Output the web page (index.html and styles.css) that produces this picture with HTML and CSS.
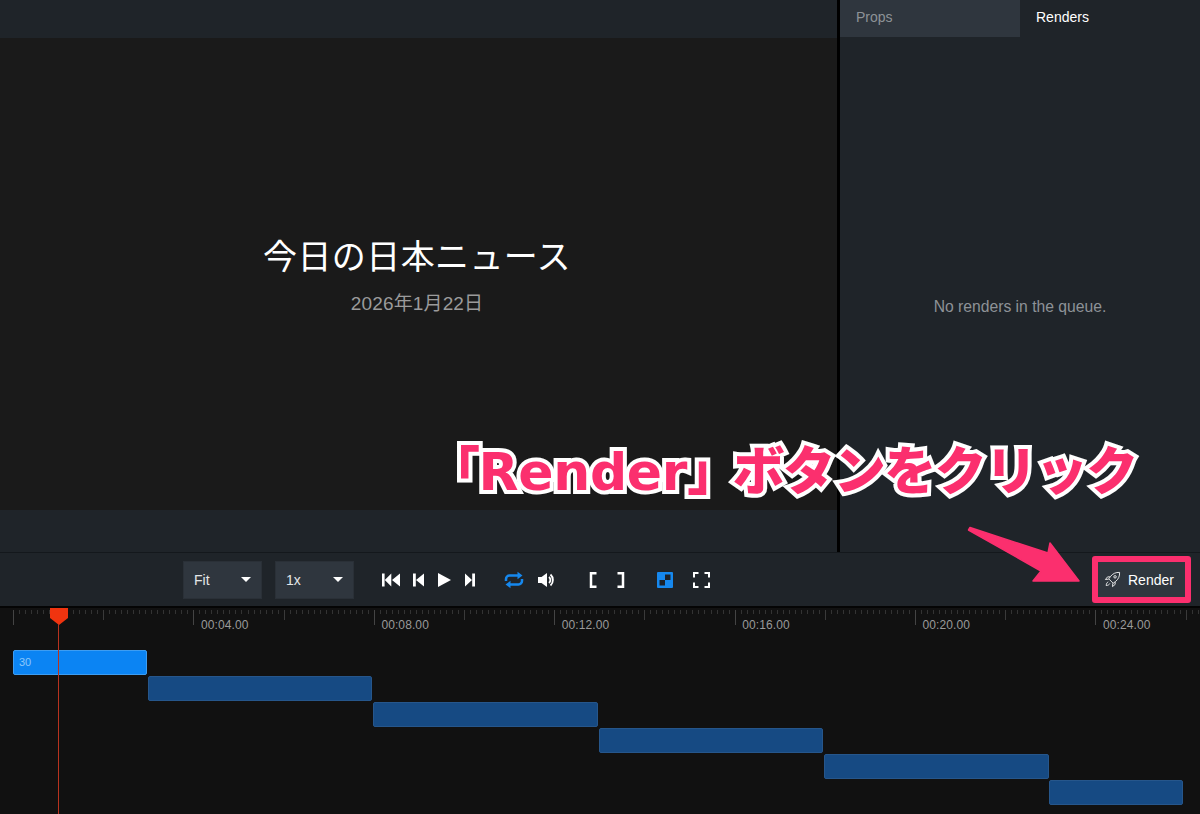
FILE: index.html
```html
<!DOCTYPE html>
<html lang="ja">
<head>
    <meta charset="UTF-8">
    <title>Render</title>
    <link rel="stylesheet" href="styles.css">
</head>
<body>
<div class="app">
  <div class="top">
    <section class="preview">
      <div class="strip strip-top"></div>
      <div class="canvas">
        <h1 class="news-title">今日の日本ニュース</h1>
        <p class="news-date">2026年1月22日</p>
      </div>
      <div class="strip strip-bottom"></div>
    </section>
    <aside class="panel">
      <div class="tabs">
        <div class="tab">Props</div>
        <div class="tab tab-active">Renders</div>
      </div>
      <div class="panel-body">No renders in the queue.</div>
    </aside>
  </div>

  <div class="toolbar">
    <div class="select select-fit">Fit<span class="caret"></span></div>
    <div class="select select-rate">1x<span class="caret"></span></div>
    <div class="controls">
      <svg class="ico ico-back" width="20" height="16" viewBox="0 0 20 16"><path d="M1 1.500h2.600v13H1zM10.300 1.500v13L3.800 8zM19 1.500v13L11 8z" fill="#fff"/></svg>
      <svg class="ico ico-prev" width="12" height="16" viewBox="0 0 12 16"><path d="M1 1.500h2.800v13H1zM12 1.500v13L4 8z" fill="#fff"/></svg>
      <svg class="ico ico-play" width="14" height="16" viewBox="0 0 14 16"><path d="M1 1v14L14 8z" fill="#fff"/></svg>
      <svg class="ico ico-next" width="12" height="16" viewBox="0 0 12 16"><path d="M1 1.500v13L8 8zM8.200 1.500H11v13H8.200z" fill="#fff"/></svg>
      <svg class="ico ico-loop" width="20" height="18" viewBox="0 0 20 18"><path d="M2 10V8a3.500 3.500 0 0 1 3.500-3.500H15M18 8v2a3.500 3.500 0 0 1-3.500 3.500H5" fill="none" stroke="#1688ee" stroke-width="2.500"/><path d="M13.500 .8v7.400L18.500 4.500zM6.500 9.800v7.400L1.500 13.500z" fill="#1688ee"/></svg>
      <svg class="ico ico-vol" width="18" height="16" viewBox="0 0 18 16"><path d="M1 5h3.500L10 1v14L4.500 11H1z" fill="#fff"/><path d="M12 5a4 4 0 0 1 0 6M13.500 2.500a7.500 7.500 0 0 1 0 11" fill="none" stroke="#fff" stroke-width="1.800"/></svg>
      <svg class="ico ico-in" width="8" height="16" viewBox="0 0 8 16"><path d="M7.500 1.200H2v13.600h5.500" fill="none" stroke="#fff" stroke-width="2.500"/></svg>
      <svg class="ico ico-out" width="8" height="16" viewBox="0 0 8 16"><path d="M.5 1.200H6v13.600H.5" fill="none" stroke="#fff" stroke-width="2.500"/></svg>
      <svg class="ico ico-check" width="16" height="16" viewBox="0 0 16 16"><rect width="16" height="16" rx="1" fill="#1688ee"/><path d="M8 2.500h5.500V8H8zM2.500 8H8v5.500H2.500z" fill="#1c222a"/></svg>
      <svg class="ico ico-full" width="17" height="16" viewBox="0 0 17 16"><path d="M1 5.500V1h4.500M11.500 1H16v4.500M16 10.500V15h-4.500M5.500 15H1v-4.500" fill="none" stroke="#fff" stroke-width="2"/></svg>
    </div>
    <div class="render-btn">
      <svg width="17" height="17" viewBox="0 0 18 18"><path d="M16.500 1.500c-4-.3-7.300 1.300-9.500 4.200L5 8.300l4.700 4.700 2.600-2c2.900-2.200 4.500-5.500 4.200-9.500zM6.500 6.200H3.800L1.500 9l3.500-.3M11.800 11.500v2.700L9 16.500l.3-3.500M4.500 11.500c-1.300.6-2 1.800-2.200 3.900 2.100-.2 3.300-.9 3.900-2.200" fill="none" stroke="#fff" stroke-width=".9" stroke-linejoin="round"/><circle cx="11.700" cy="6.200" r="1.300" fill="none" stroke="#fff" stroke-width=".9"/></svg>
      Render
    </div>
  </div>

  <div class="timeline">
    <div class="ruler">
      <span class="time">00:04.00</span>
      <span class="time">00:08.00</span>
      <span class="time">00:12.00</span>
      <span class="time">00:16.00</span>
      <span class="time">00:20.00</span>
      <span class="time">00:24.00</span>
    </div>
    <div class="tracks">
      <div class="clip clip-active" style="margin-left:13px;width:134px">30</div>
      <div class="clip" style="margin-left:148px;width:224px"></div>
      <div class="clip" style="margin-left:373px;width:225px"></div>
      <div class="clip" style="margin-left:599px;width:224px"></div>
      <div class="clip" style="margin-left:824px;width:225px"></div>
      <div class="clip" style="margin-left:1049px;width:134px"></div>
    </div>
    <div class="playhead">
      <svg width="18" height="17" viewBox="0 0 18 17"><path d="M0 0h18v10l-9 7-9-7z" fill="#f0340f"/></svg>
    </div>
  </div>

  <!-- annotation over the screenshot -->
  <div class="callout">「<span class="callout-latin">Render</span><span class="callout-close">」</span>ボタンをクリック</div>
  <svg class="arrow" width="130" height="70" viewBox="0 0 130 70"><path d="M1.500 4 3 1.500 81 27 83 17 112 55 66 55 74 45z" fill="#fb2f6e" stroke="#fb2f6e" stroke-width="1.500" stroke-linejoin="round"/></svg>
  <div class="render-mark"></div>
</div>
</body>
</html>
```

FILE: styles.css
```css
* {
  box-sizing: border-box;
}

html, body {
  margin: 0;
  height: 100%;
  overflow: hidden;
}

body {
  background: #111;
  color: #fff;
  font-family: "Liberation Sans", "Noto Sans CJK JP", sans-serif;
}

.app {
  position: relative;
  width: 1200px;
  height: 814px;
  display: flex;
  flex-direction: column;
}

/* Preview + side panel */
.top {
  display: flex;
  height: 552px;
}

.preview {
  width: 837px;
  display: flex;
  flex-direction: column;
}

.strip {
  background: #1f2429;
}

.strip-top {
  height: 38px;
}

.strip-bottom {
  height: 42px;
}

.canvas {
  flex: 1;
  background: #1a1a1a;
  display: flex;
  flex-direction: column;
  align-items: center;
  padding-top: 195px;
  padding-right: 3px;
}

.news-title {
  margin: 0;
  font-size: 34px;
  line-height: 44px;
  font-weight: 400;
  letter-spacing: 0.4px;
  font-family: "Noto Sans CJK JP", sans-serif;
  color: #fff;
}

.news-date {
  margin: 15px 0 0;
  font-size: 19px;
  line-height: 24px;
  letter-spacing: 0.15px;
  font-family: "Liberation Sans", "Noto Sans CJK JP", sans-serif;
  color: #9b9b9b;
}

.panel {
  flex: 1;
  margin-left: 3px;
  background: #1f2429;
  display: flex;
  flex-direction: column;
  position: relative;
}

.panel::before {
  content: "";
  position: absolute;
  left: -3px;
  top: 0;
  width: 3px;
  height: 100%;
  background: #000;
}

.tabs {
  display: flex;
  height: 37px;
  font-size: 14px;
}

.tab {
  width: 180px;
  padding: 9px 16px 0;
  background: #2f363e;
  color: #8d9297;
}

.tab-active {
  background: transparent;
  color: #fff;
}

.panel-body {
  flex: 1;
  display: flex;
  align-items: center;
  justify-content: center;
  padding-top: 24px;
  font-size: 15.7px;
  color: #8d9297;
}

/* Player controls */
.toolbar {
  height: 54px;
  background: #1f2429;
  border-top: 1px solid #14181c;
  display: flex;
  align-items: center;
  padding: 0 15px 0 183px;
}

.select {
  width: 79px;
  height: 38px;
  padding: 0 10px;
  margin-right: 13px;
  background: #2f363e;
  border: 1px solid #2a3037;
  font-size: 14px;
  color: #e4e6e8;
  display: flex;
  align-items: center;
  justify-content: space-between;
}

.caret {
  width: 0;
  height: 0;
  border-left: 5px solid transparent;
  border-right: 5px solid transparent;
  border-top: 5px solid #fff;
}

.controls {
  display: flex;
  align-items: center;
  margin-left: 14px;
  flex: 1;
}

.ico {
  flex: none;
  display: block;
}

.ico-prev {
  margin-left: 11px;
}

.ico-play {
  margin-left: 13px;
}

.ico-next {
  margin-left: 13px;
}

.ico-loop {
  margin-left: 28px;
}

.ico-vol {
  margin-left: 13px;
}

.ico-in {
  margin-left: 34px;
}

.ico-out {
  margin-left: 20px;
}

.ico-check {
  margin-left: 32px;
}

.ico-full {
  margin-left: 20px;
}

.render-btn {
  width: 88px;
  height: 40px;
  padding-left: 7px;
  background: #2f363e;
  display: flex;
  align-items: center;
  gap: 7px;
  font-size: 14px;
  color: #fff;
}

/* Timeline */
.timeline {
  flex: 1;
  position: relative;
  background: #111;
  border-top: 2px solid #050505;
}

.ruler {
  height: 42px;
  padding-left: 194px;
  display: flex;
  background-image:
    repeating-linear-gradient(90deg, #444 0 1px, transparent 1px 180.4px),
    repeating-linear-gradient(90deg, #3a3a3a 0 1px, transparent 1px 90.2px),
    repeating-linear-gradient(90deg, #333 0 1px, transparent 1px 6.013px);
  background-size: 100% 15px, 100% 10px, 100% 4px;
  background-position: 13px 2px, 13px 2px, 13px 2px;
  background-repeat: no-repeat;
}

.time {
  flex: none;
  width: 180.4px;
  padding: 10px 0 0 7px;
  font-size: 12px;
  line-height: 15px;
  color: #9a9a9a;
  letter-spacing: 0.1px;
}

.time:last-child {
  width: auto;
}

.tracks {
  display: flex;
  flex-direction: column;
  gap: 1px;
}

.clip {
  height: 25px;
  background: #164a83;
  border: 1px solid #26568b;
  border-radius: 2px;
}

.clip-active {
  background: #0b84f3;
  border-color: #3d9df2;
  color: #8cc7fb;
  font-size: 11px;
  line-height: 22px;
  padding-left: 5px;
}

.playhead {
  position: absolute;
  left: 50px;
  top: 0;
  bottom: 0;
  width: 18px;
}

.playhead::after {
  content: "";
  position: absolute;
  left: 8px;
  top: 16px;
  bottom: 0;
  width: 1px;
  background: #b8331f;
}

.playhead svg {
  display: block;
}

/* Annotation */
.callout {
  position: absolute;
  left: 428px;
  top: 437px;
  font-size: 52px;
  line-height: 62px;
  font-weight: 900;
  letter-spacing: -1.500px;
  white-space: nowrap;
  color: #fb2f6e;
  -webkit-text-stroke: 8px #fff;
  paint-order: stroke fill;
  font-family: "Noto Sans CJK JP", sans-serif;
}

.callout-latin {
  font-family: "DejaVu Sans", sans-serif;
  font-weight: 700;
  letter-spacing: -0.3px;
}

.callout-close {
  letter-spacing: -6.500px;
}

.arrow {
  position: absolute;
  left: 967px;
  top: 526px;
}

.render-mark {
  position: absolute;
  left: 1092px;
  top: 556px;
  width: 99px;
  height: 47px;
  border: 6px solid #fb2f6e;
  border-radius: 3px;
}
```
